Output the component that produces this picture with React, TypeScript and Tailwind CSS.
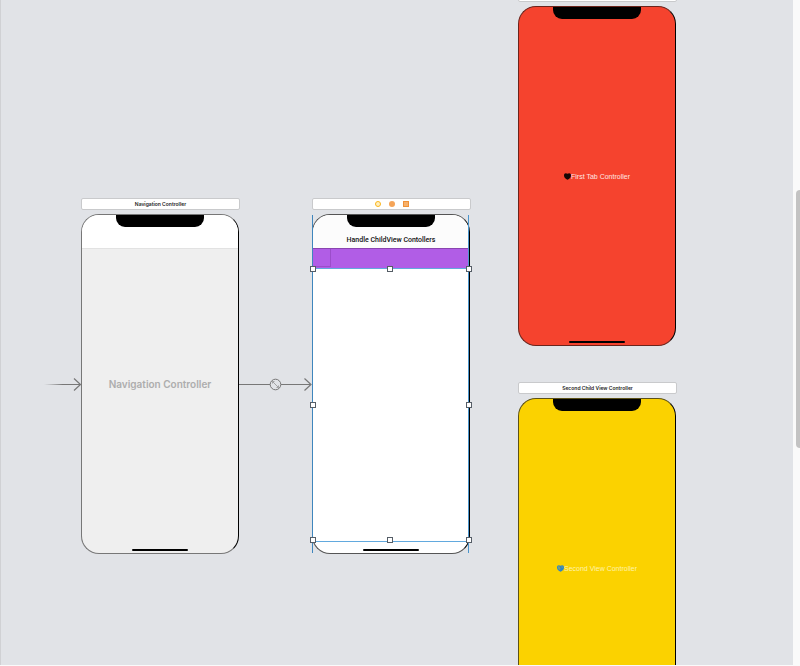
import type { ReactNode } from "react";

type SceneProps = {
  place: string;
  header?: ReactNode;
  screen: string;
  outline: string;
  children?: ReactNode;
};

function Scene({ place, header, screen, outline, children }: SceneProps) {
  return (
    <section className={`absolute flex w-[158px] flex-col gap-1 ${place}`}>
      <header className="-mr-px flex h-3 items-center justify-center gap-2 rounded-xs border border-[#c9cacc] bg-white text-[5px] leading-none font-semibold text-[#222]">
        {header}
      </header>
      <div className={`relative h-[340px] overflow-hidden rounded-[18px] border border-r-black ${outline} ${screen}`}>
        {children}
        <div className="absolute inset-x-0 top-0 mx-auto h-3 w-[88px] rounded-b-[9px] bg-black" />
        <div className="absolute inset-x-0 bottom-[2px] mx-auto h-[2px] w-14 rounded-full bg-black" />
      </div>
    </section>
  );
}

function Heart({ fill, spot }: { fill: string; spot?: string }) {
  return (
    <svg viewBox="0 0 14 14" className="size-[7px]" aria-hidden="true">
      <path d="M7 13.500C3 12 0 9 0 5C0 2 1.500 0.500 3.500 0.500C5 0.500 6.400 0.900 7 1.600C7.600 0.900 9 0.500 10.500 0.500C12.500 0.500 14 2 14 5C14 9 11 12 7 13.500Z" fill={fill} />
      {spot && <path d="M2 2L6 4L7 8L5 10L2 7ZM9 2L12 4L11 6L9 5Z" fill={spot} />}
    </svg>
  );
}

const guides = [
  "left-[312px] top-[215px] h-[338px] w-px bg-[#3f86bd]",
  "left-[468px] top-[215px] h-[338px] w-px bg-[#4b95cc]",
  "left-[312px] top-[268px] h-px w-[157px] bg-[#62a9de]",
  "left-[312px] top-[541px] h-px w-[157px] bg-[#62a9de]",
];

const grips = [
  "left-[310px] top-[266px]",
  "left-[387px] top-[266px]",
  "left-[466px] top-[266px]",
  "left-[310px] top-[402px]",
  "left-[466px] top-[402px]",
  "left-[310px] top-[537px]",
  "left-[387px] top-[537px]",
  "left-[466px] top-[537px]",
];

export default function App() {
  return (
    <div className="flex h-screen overflow-hidden bg-[#fafafa] pb-px font-['Inter','Liberation_Sans',sans-serif]">
      <main className="relative min-w-0 flex-1 overflow-hidden border-l border-[#d0d1d4] bg-[#e1e3e7]">
        <div className="absolute inset-y-0 -left-px w-full">
          <Scene place="left-[81px] top-[198px]" header="Navigation Controller" screen="bg-[#efefef]" outline="border-[#777]">
            <div className="flex h-full flex-col">
              <div className="h-[34px] border-b border-[#e2e2e2] bg-white" />
              <h2 className="flex h-[271px] items-center justify-center text-[10px] font-semibold text-[#adadad]">
                Navigation Controller
              </h2>
            </div>
          </Scene>

          <Scene
            place="left-[312px] top-[198px]"
            header={
              <>
                <button type="button" aria-label="View controller" className="size-[6px] rounded-full border border-[#fbb51c] bg-[#fff0c0]" />
                <button type="button" aria-label="First responder" className="size-[6px] rounded-full bg-[#f5a458]" />
                <button type="button" aria-label="Exit" className="size-[6px] border border-[#ef9138] bg-[#f6b06a]" />
              </>
            }
            screen="bg-white"
            outline="border-[#555]"
          >
            <div className="flex h-[33px] items-end justify-center bg-[#fcfcfc] pb-[3px] font-['Roboto','Liberation_Sans',sans-serif] text-[7px] leading-[9px] font-medium text-[#111]">
              Handle ChildView Contollers
            </div>
            <div className="h-5 border-t border-[#8a45b0] bg-[#b15de6]">
              <div className="h-[18px] w-[18px] border-r border-b border-[#9b4dca]" />
            </div>
          </Scene>

          {guides.map((line) => (
            <span key={line} className={`absolute ${line}`} />
          ))}
          {grips.map((spot) => (
            <span key={spot} className={`absolute size-[6px] border border-[#555d66] bg-white ${spot}`} />
          ))}

          <Scene place="left-[518px] top-[-10px]" screen="bg-[#f5432e]" outline="border-[#6b241c]">
            <p className="flex h-full items-center justify-center font-['Liberation_Sans',sans-serif] text-[7px] leading-none text-[#ffe6e2]">
              <Heart fill="#160604" />
              First Tab Controller
            </p>
          </Scene>

          <Scene place="left-[518px] top-[382px]" header="Second Child View Controller" screen="bg-[#fbd200]" outline="border-[#5c5118]">
            <p className="flex h-full items-center justify-center font-['Liberation_Sans',sans-serif] text-[7px] leading-none text-[#fff3ac]">
              <Heart fill="#2f86c4" spot="#78a07a" />
              Second View Controller
            </p>
          </Scene>

          <svg className="absolute top-[376px] left-[44px] h-[17px] w-[38px]" viewBox="0 0 38 17" fill="none" aria-label="Initial scene">
            <defs>
              <linearGradient id="entry" x1="0" x2="37" y1="0" y2="0" gradientUnits="userSpaceOnUse">
                <stop stopColor="#888" stopOpacity="0" />
                <stop offset="0.5" stopColor="#777" />
              </linearGradient>
            </defs>
            <rect y="8" width="36" height="1" fill="url(#entry)" />
            <path d="M30 2.500L36.500 8.500L30 14.500" stroke="#777" strokeWidth="1.200" />
          </svg>
          <svg className="absolute top-[376px] left-[239px] h-[17px] w-[73px]" viewBox="0 0 73 17" fill="none" stroke="#777" aria-label="Root view segue">
            <path d="M0 8.500H31M42 8.500H71.500" />
            <path d="M65.500 2.500L72 8.500L65.500 14.500" strokeWidth="1.200" />
            <circle cx="36.500" cy="8.500" r="5.300" />
            <path d="M34 6L39 11M33.500 7.500V5.500H35.500M37.500 11.500H39.500V9.500" strokeWidth="0.600" />
          </svg>
        </div>
      </main>
      <div className="flex w-[7px] shrink-0 flex-col pl-[3px]">
        <div className="mt-[190px] h-[258px] rounded-l-sm bg-[#c3c3c3]" />
      </div>
    </div>
  );
}
